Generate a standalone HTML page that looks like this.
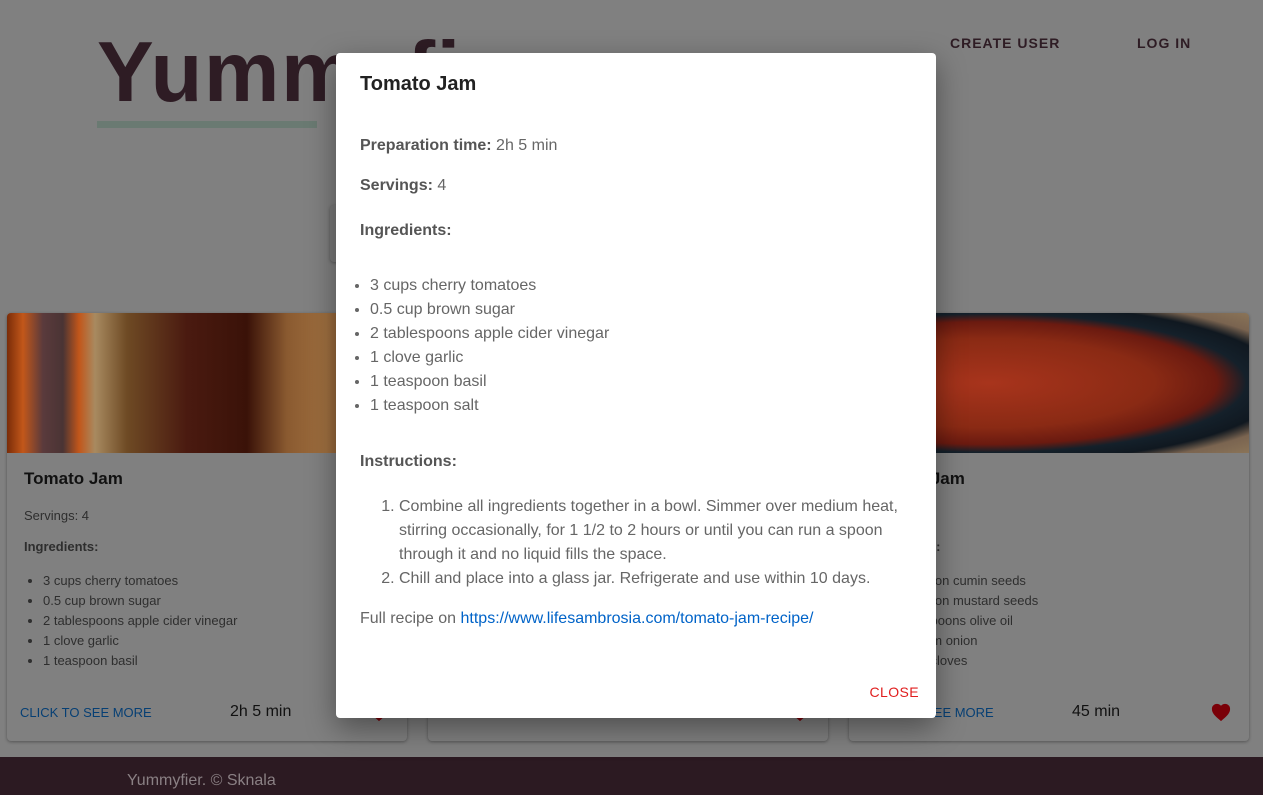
<!DOCTYPE html>
<html><head><meta charset="utf-8"><style>
*{box-sizing:border-box;margin:0;padding:0}
body{width:1263px;height:795px;overflow:hidden;background:#808080;font-family:"Liberation Sans",Arial,sans-serif;position:relative}
.logo{position:absolute;left:97px;top:24px;font-size:85px;font-weight:bold;color:#2e1c24;letter-spacing:1.5px}
.bar{position:absolute;left:97px;top:121px;width:220px;height:7px;background:#6a7a72}
.nav{position:absolute;top:35px;font-size:14px;font-weight:bold;color:#2e1c24;letter-spacing:1px}
.search{position:absolute;left:330px;top:205px;width:20px;height:57px;background:#7a7a7a;border-radius:4px;box-shadow:0 1px 3px rgba(0,0,0,.3)}
.card{position:absolute;top:313px;width:400px;height:428px;background:#808080;border-radius:4px;box-shadow:0 1px 3px rgba(0,0,0,.35);overflow:hidden}
.img{height:140px}
.card h3{font-size:17px;color:#111;margin:16px 0 0 17px}
.card .s{font-size:13px;color:#2e2e2e;margin:19px 0 0 17px}
.card .i{font-size:13px;font-weight:bold;color:#2e2e2e;margin:16px 0 0 17px}
.card ul{font-size:13px;color:#2e2e2e;margin:17px 0 0 36px;line-height:20px}
.card .f{position:absolute;top:392px;left:13px;font-size:13px;color:#063f74}
.card .t{position:absolute;top:390px;left:223px;font-size:16px;color:#111}
.heart{position:absolute;top:389px;left:361px}
.footer{position:absolute;left:0;top:757px;width:1263px;height:38px;background:#2c1a22;color:#8a8084;font-size:16px;padding:15px 0 0 127px}
.modal{position:absolute;left:336px;top:53px;width:600px;height:665px;background:#fff;border-radius:4px;box-shadow:0 10px 30px rgba(0,0,0,.4);padding:0 24px;color:#666;font-size:16px}
.modal h2{font-size:20px;color:#222;margin-top:20px;font-weight:bold}
.modal b{color:#555}
.modal ul{margin:34px 0 0 10px;line-height:24px}
.modal ol{margin:24px 0 0 39px;line-height:24px}
a{color:#0063c8;text-decoration:none}
.close{position:absolute;right:17px;top:631px;font-size:14px;color:#e01e1e;letter-spacing:.4px}
</style></head><body>
<div class="logo">Yummyfier</div>
<div class="bar"></div>
<div class="nav" style="left:950px">CREATE USER</div>
<div class="nav" style="left:1137px">LOG IN</div>
<div class="search"></div>

<div class="card" style="left:7px">
<div class="img" style="background:linear-gradient(90deg,#7a2c08 0,#c2571a 4%,#5a3a3c 9%,#4a3434 14%,#c2561a 18%,#a88a60 22%,#6e4a24 30%,#4a1a10 45%,#3a1208 60%,#8a5a30 70%,#a07040 80%,#5a2a14 100%)"></div>
<h3>Tomato Jam</h3>
<div class="s">Servings: 4</div>
<div class="i">Ingredients:</div>
<ul><li>3 cups cherry tomatoes</li><li>0.5 cup brown sugar</li><li>2 tablespoons apple cider vinegar</li><li>1 clove garlic</li><li>1 teaspoon basil</li></ul>
<div class="f">CLICK TO SEE MORE</div>
<div class="t">2h 5 min</div>
<svg class="heart" width="22" height="20" viewBox="0 0 24 22"><path d="M12 21l-1.5-1.3C5 15 2 12 2 7.5 2 4.4 4.4 2 7.5 2c1.7 0 3.4.8 4.5 2.1C13.1 2.8 14.8 2 16.5 2 19.6 2 22 4.4 22 7.5c0 4.5-3 7.5-8.5 12.2z" fill="#7a0008"/></svg>
</div>

<div class="card" style="left:428px">
<div class="img" style="background:#5a2a1a"></div>
<svg class="heart" width="22" height="20" viewBox="0 0 24 22"><path d="M12 21l-1.5-1.3C5 15 2 12 2 7.5 2 4.4 4.4 2 7.5 2c1.7 0 3.4.8 4.5 2.1C13.1 2.8 14.8 2 16.5 2 19.6 2 22 4.4 22 7.5c0 4.5-3 7.5-8.5 12.2z" fill="#7a0008"/></svg>
</div>

<div class="card" style="left:849px">
<div class="img" style="background:radial-gradient(ellipse at 35% 50%,#a8341c 0,#8a2a14 45%,#6a1a10 62%,#14202a 70%,#101820 80%,#7a6450 88%,#8a7458 100%)"></div>
<h3>Tomato Jam</h3>
<div class="s">Servings: 6</div>
<div class="i">Ingredients:</div>
<ul><li>1 teaspoon cumin seeds</li><li>1 teaspoon mustard seeds</li><li>2 tablespoons olive oil</li><li>1 medium onion</li><li>2 garlic cloves</li></ul>
<div class="f">CLICK TO SEE MORE</div>
<div class="t">45 min</div>
<svg class="heart" width="22" height="20" viewBox="0 0 24 22"><path d="M12 21l-1.5-1.3C5 15 2 12 2 7.5 2 4.4 4.4 2 7.5 2c1.7 0 3.4.8 4.5 2.1C13.1 2.8 14.8 2 16.5 2 19.6 2 22 4.4 22 7.5c0 4.5-3 7.5-8.5 12.2z" fill="#7a0008"/></svg>
</div>

<div class="footer">Yummyfier. © Sknala</div>

<div class="modal">
<h2>Tomato Jam</h2>
<p style="margin-top:41px"><b>Preparation time:</b> 2h 5 min</p>
<p style="margin-top:22px"><b>Servings:</b> 4</p>
<p style="margin-top:27px"><b>Ingredients:</b></p>
<ul><li>3 cups cherry tomatoes</li><li>0.5 cup brown sugar</li><li>2 tablespoons apple cider vinegar</li><li>1 clove garlic</li><li>1 teaspoon basil</li><li>1 teaspoon salt</li></ul>
<p style="margin-top:35px"><b>Instructions:</b></p>
<ol><li>Combine all ingredients together in a bowl. Simmer over medium heat, stirring occasionally, for 1 1/2 to 2 hours or until you can run a spoon through it and no liquid fills the space.</li><li>Chill and place into a glass jar. Refrigerate and use within 10 days.</li></ol>
<p style="margin-top:19px">Full recipe on <a>https://www.lifesambrosia.com/tomato-jam-recipe/</a></p>
<div class="close">CLOSE</div>
</div>
</body></html>
